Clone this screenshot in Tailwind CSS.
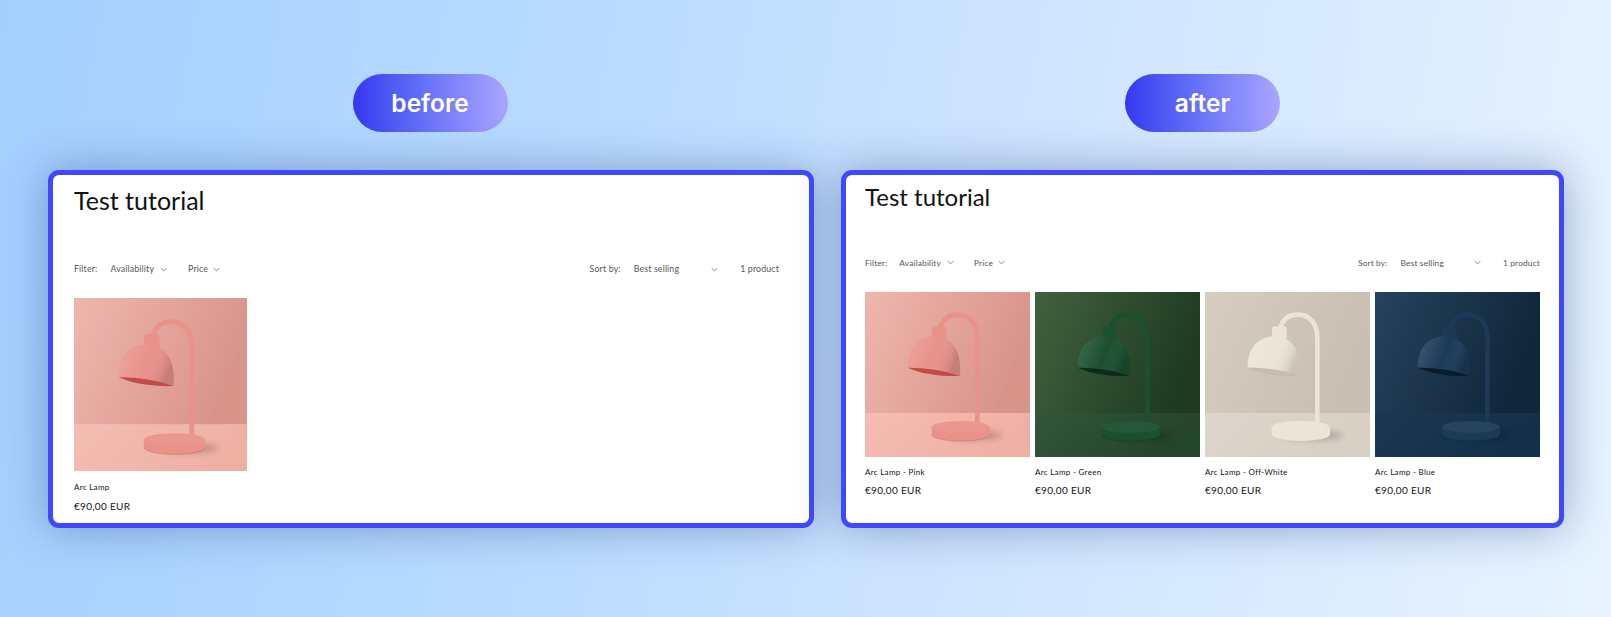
<!DOCTYPE html>
<html lang="en">
<head>
    <meta charset="UTF-8">
    <title>Before / After</title>
    <script src="https://cdn.jsdelivr.net/npm/@tailwindcss/browser@4"></script>
</head>
<body class="w-[1611px] h-[617px] overflow-hidden bg-[linear-gradient(100deg,#a4cfff_0%,#b9dbff_35%,#cde4ff_60%,#e8f3ff_100%)] font-['Lato',sans-serif]">
    <!-- shared lamp drawing, colours come from the --wall/--wall2/--floor/--floor2/--lamp/--inner vars -->
    <svg class="block w-0 h-0" aria-hidden="true">
        <defs>
            <linearGradient id="fadeGrad" x1="0" y1="0" x2="1" y2="0.3">
                <stop offset="0" stop-color="#000"/>
                <stop offset="1" stop-color="#fff"/>
            </linearGradient>
            <mask id="fade" maskContentUnits="objectBoundingBox" x="0" y="0" width="1" height="1">
                <rect width="1" height="1" fill="url(#fadeGrad)"/>
            </mask>
            <linearGradient id="domeShade" x1="0" y1="0" x2="1" y2="0.3">
                <stop offset="0" stop-color="#fff" stop-opacity="0.16"/>
                <stop offset="0.6" stop-color="#fff" stop-opacity="0"/>
                <stop offset="1" stop-color="#000" stop-opacity="0.14"/>
            </linearGradient>
            <filter id="soft" x="-30%" y="-80%" width="160%" height="260%">
                <feGaussianBlur stdDeviation="9"/>
            </filter>
            <symbol id="lamp" viewBox="0 0 495 495">
                <rect width="495" height="363" fill="var(--wall)"/>
                <rect width="495" height="363" fill="var(--wall2)" mask="url(#fade)"/>
                <rect y="363" width="495" height="132" fill="var(--floor)"/>
                <rect y="363" width="495" height="132" fill="var(--floor2)" mask="url(#fade)"/>
                <ellipse cx="325" cy="430" rx="88" ry="14" fill="#000" opacity="0.2" filter="url(#soft)"/>
                <path d="M226 108C234 78 256 68 279 68C314 68 337 96 337 136V396" fill="none" stroke="var(--lamp)" stroke-width="14" stroke-linecap="round"/>
                <path d="M201 112Q201 103 210 103H236Q245 103 245 112V140H201Z" fill="var(--lamp)"/>
                <path d="M128 227C126 170 160 133 208 133C262 133 292 180 285 252C240 234 170 226 128 227Z" fill="var(--lamp)"/>
                <path d="M128 227C126 170 160 133 208 133C262 133 292 180 285 252C240 234 170 226 128 227Z" fill="url(#domeShade)"/>
                <path d="M128 227C170 226 240 234 285 252C230 254 170 246 128 227Z" fill="var(--inner)"/>
                <path d="M200 405V428C200 438 238 447 287 447C336 447 375 438 375 428V405Z" fill="var(--lamp)"/>
                <path d="M200 428C200 438 238 447 287 447C336 447 375 438 375 428" fill="none" stroke="var(--inner)" stroke-width="1.5" opacity="0.6"/>
                <ellipse cx="287" cy="405" rx="87" ry="18" fill="var(--lamp)"/>
                <ellipse cx="287" cy="405" rx="87" ry="18" fill="#fff" opacity="0.05"/>
            </symbol>
        </defs>
    </svg>

    <div class="flex gap-[27px] pl-[48px] pt-[74px]">
        <!-- before -->
        <section class="flex flex-col items-center w-[766px]">
            <div class="w-[155px] h-[58px] rounded-full flex items-center justify-center bg-gradient-to-r from-[#3636ee] to-[#aba5ff] text-white font-['Inter',sans-serif] font-semibold text-[24.5px] -ml-[2px]">before</div>
            <div class="mt-[38px] w-full h-[358px] bg-white border-[5px] border-[#3f48ff] rounded-[11px] shadow-[0_0_45px_rgba(30,60,120,0.4)] pl-[21px] pr-[30px] text-[#121212]">
                <h1 class="mt-[10px] text-[25px] leading-[30px]">Test tutorial</h1>
                <div class="mt-[46px] h-[16px] flex items-center justify-between text-[8.8px] tracking-[0.15px] text-[#555]">
                    <div class="flex items-center">
                        <span>Filter:</span>
                        <span class="ml-[13px]">Availability</span>
                        <svg class="ml-[6px] w-[7px] h-[7px]" viewBox="0 0 10 10" fill="none" stroke="currentColor" stroke-width="1"><path d="M1 3l4 4 4-4"/></svg>
                        <span class="ml-[21px]">Price</span>
                        <svg class="ml-[5px] w-[7px] h-[7px]" viewBox="0 0 10 10" fill="none" stroke="currentColor" stroke-width="1"><path d="M1 3l4 4 4-4"/></svg>
                    </div>
                    <div class="flex items-center">
                        <span>Sort by:</span>
                        <span class="ml-[13px]">Best selling</span>
                        <svg class="ml-[32px] w-[7px] h-[7px]" viewBox="0 0 10 10" fill="none" stroke="currentColor" stroke-width="1"><path d="M1 3l4 4 4-4"/></svg>
                        <span class="ml-[22px]">1 product</span>
                    </div>
                </div>
                <div class="mt-[21px] w-[173px]">
                    <svg class="block w-[173px] h-[173px] [--wall:#efb7ad] [--wall2:#d9948a] [--floor:#f5beb3] [--floor2:#efb0a4] [--lamp:#e8928a] [--inner:#c24a47]"><use href="#lamp"/></svg>
                    <p class="mt-[11px] text-[8px] leading-[11px] tracking-[0.3px]">Arc Lamp</p>
                    <p class="mt-[6px] text-[10px] leading-[14px] tracking-[0.3px]">€90,00 EUR</p>
                </div>
            </div>
        </section>

        <!-- after -->
        <section class="flex flex-col items-center w-[723px]">
            <div class="w-[155px] h-[58px] rounded-full flex items-center justify-center bg-gradient-to-r from-[#3636ee] to-[#aba5ff] text-white font-['Inter',sans-serif] font-semibold text-[24.5px]">after</div>
            <div class="mt-[38px] w-full h-[358px] bg-white border-[5px] border-[#3f48ff] rounded-[11px] shadow-[0_0_45px_rgba(30,60,120,0.4)] px-[19px] text-[#121212]">
                <h1 class="mt-[7px] text-[24px] leading-[30px]">Test tutorial</h1>
                <div class="mt-[43px] h-[16px] flex items-center justify-between text-[8.4px] tracking-[0.15px] text-[#555]">
                    <div class="flex items-center">
                        <span>Filter:</span>
                        <span class="ml-[12px]">Availability</span>
                        <svg class="ml-[6px] w-[7px] h-[7px]" viewBox="0 0 10 10" fill="none" stroke="currentColor" stroke-width="1"><path d="M1 3l4 4 4-4"/></svg>
                        <span class="ml-[20px]">Price</span>
                        <svg class="ml-[5px] w-[7px] h-[7px]" viewBox="0 0 10 10" fill="none" stroke="currentColor" stroke-width="1"><path d="M1 3l4 4 4-4"/></svg>
                    </div>
                    <div class="flex items-center">
                        <span>Sort by:</span>
                        <span class="ml-[13px]">Best selling</span>
                        <svg class="ml-[30px] w-[7px] h-[7px]" viewBox="0 0 10 10" fill="none" stroke="currentColor" stroke-width="1"><path d="M1 3l4 4 4-4"/></svg>
                        <span class="ml-[22px]">1 product</span>
                    </div>
                </div>
                <div class="mt-[21px] grid grid-cols-4 gap-[5px]">
                    <div>
                        <svg class="block w-full aspect-square [--wall:#efb7ad] [--wall2:#d9948a] [--floor:#f5beb3] [--floor2:#efb0a4] [--lamp:#e8928a] [--inner:#c24a47]"><use href="#lamp"/></svg>
                        <p class="mt-[10px] text-[8px] leading-[11px] tracking-[0.3px]">Arc Lamp - Pink</p>
                        <p class="mt-[5px] text-[10px] leading-[14px] tracking-[0.3px]">€90,00 EUR</p>
                    </div>
                    <div>
                        <svg class="block w-full aspect-square [--wall:#41623f] [--wall2:#1f3c22] [--floor:#33573a] [--floor2:#234529] [--lamp:#1c4f30] [--inner:#0e2a1b]"><use href="#lamp"/></svg>
                        <p class="mt-[10px] text-[8px] leading-[11px] tracking-[0.3px]">Arc Lamp - Green</p>
                        <p class="mt-[5px] text-[10px] leading-[14px] tracking-[0.3px]">€90,00 EUR</p>
                    </div>
                    <div>
                        <svg class="block w-full aspect-square [--wall:#d6cec2] [--wall2:#c8beb1] [--floor:#ded7cc] [--floor2:#d6cfc3] [--lamp:#ece5d6] [--inner:#c6bdab]"><use href="#lamp"/></svg>
                        <p class="mt-[10px] text-[8px] leading-[11px] tracking-[0.3px]">Arc Lamp - Off-White</p>
                        <p class="mt-[5px] text-[10px] leading-[14px] tracking-[0.3px]">€90,00 EUR</p>
                    </div>
                    <div>
                        <svg class="block w-full aspect-square [--wall:#26435e] [--wall2:#10273b] [--floor:#1c3854] [--floor2:#13304a] [--lamp:#1b3a58] [--inner:#0a1c2c]"><use href="#lamp"/></svg>
                        <p class="mt-[10px] text-[8px] leading-[11px] tracking-[0.3px]">Arc Lamp - Blue</p>
                        <p class="mt-[5px] text-[10px] leading-[14px] tracking-[0.3px]">€90,00 EUR</p>
                    </div>
                </div>
            </div>
        </section>
    </div>
</body>
</html>
